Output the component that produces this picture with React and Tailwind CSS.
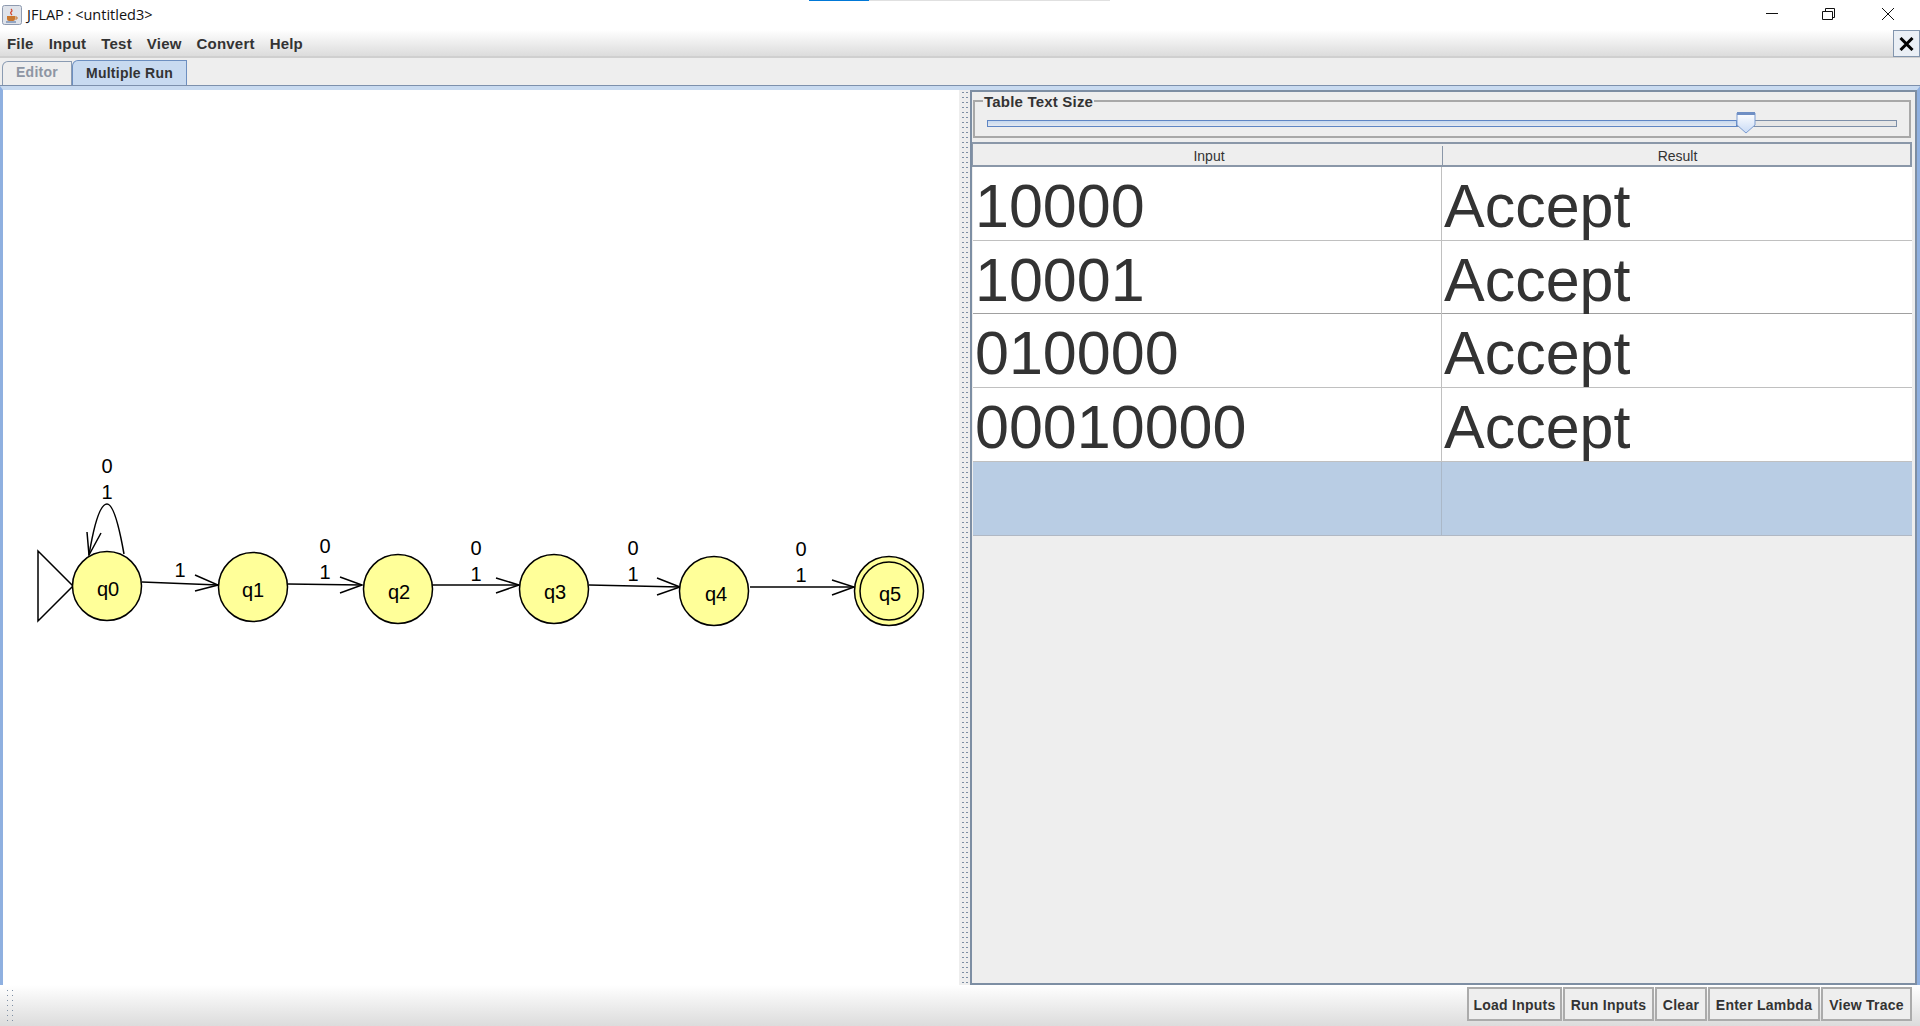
import React from "react";

const sans = "font-['Liberation_Sans',Arial,sans-serif]";

const states = [
  { name: "q0", x: 107, y: 586, tx: 108 },
  { name: "q1", x: 253, y: 587, tx: 253 },
  { name: "q2", x: 398, y: 589, tx: 399 },
  { name: "q3", x: 554, y: 589, tx: 555 },
  { name: "q4", x: 714, y: 591, tx: 716 },
  { name: "q5", x: 889, y: 591, tx: 890, final: true },
];

// line, then the two arrowhead barbs, all in page coordinates
const edges = [
  { d: "M142 582 L218 585", head: "M195 575 L218 585 L195 591" },
  { d: "M288 584 L362 585", head: "M340 577 L362 585 L340 593" },
  { d: "M432 585 L519 585", head: "M496 578 L519 585 L496 593" },
  { d: "M589 585 L680 587", head: "M657 578 L680 587 L657 595" },
  { d: "M750 587 L854 587", head: "M832 580 L854 587 L832 595" },
];

const labels = [
  { t: "0", x: 107, y: 473 },
  { t: "1", x: 107, y: 499 },
  { t: "1", x: 180, y: 577 },
  { t: "0", x: 325, y: 553 },
  { t: "1", x: 325, y: 579 },
  { t: "0", x: 476, y: 555 },
  { t: "1", x: 476, y: 581 },
  { t: "0", x: 633, y: 555 },
  { t: "1", x: 633, y: 581 },
  { t: "0", x: 801, y: 556 },
  { t: "1", x: 801, y: 582 },
];

const rows = [
  { input: "10000", result: "Accept" },
  { input: "10001", result: "Accept", dark: true },
  { input: "010000", result: "Accept" },
  { input: "00010000", result: "Accept" },
];

const TitleBar = () => (
  <div className="relative flex h-[30px] shrink-0 items-center bg-white">
    <div className="absolute left-[809px] top-0 h-px w-[60px] bg-[#0078d7]" />
    <div className="absolute left-[869px] top-0 h-px w-[241px] bg-[#e0e0e0]" />
    <svg width="20" height="20" viewBox="0 0 20 20" className="ml-[2px]">
      <rect x="0.5" y="0.5" width="19" height="19" rx="2" fill="#dfe3ea" stroke="#8f9bb0" />
      <path d="M5 11 H13 V14 Q13 16 11 16 H7 Q5 16 5 14 Z" fill="#c9772e" />
      <path d="M13 12 H15 V14 H13" fill="none" stroke="#c9772e" />
      <path d="M9 4 Q11 6 9 7 Q8 8 10 10" fill="none" stroke="#d2452e" strokeWidth="1.2" />
      <path d="M4 17 H14" stroke="#4a6a9c" />
    </svg>
    <span className="ml-[5px] font-['Open_Sans',sans-serif] text-[14.5px] text-[#111]">JFLAP : &lt;untitled3&gt;</span>
    <div className="ml-auto mr-[3px] flex items-center">
      <svg width="46" height="30" viewBox="0 0 46 30"><path d="M11 13.5 H23" stroke="#111" strokeWidth="1" /></svg>
      <svg width="46" height="30" viewBox="0 0 46 30" className="ml-[12px]">
        <path d="M9.5 11.5 H19.5 V19.5 H9.5 Z M12.5 11 V8.5 H21.5 V17.5 H19.5" fill="none" stroke="#111" />
      </svg>
      <svg width="46" height="30" viewBox="0 0 46 30" className="ml-[12px]">
        <path d="M11 8 L23 20 M23 8 L11 20" stroke="#111" />
      </svg>
    </div>
  </div>
);

const MenuBar = () => (
  <div className={`flex h-[28px] shrink-0 items-center justify-between border-b-2 border-[#cfcfcf] bg-gradient-to-b from-white to-[#dcdcdc] ${sans}`}>
    <div className="flex gap-[15px] pl-[7px] pt-[2px] text-[15px] font-bold tracking-[0.2px] text-[#333]">
      <span>File</span>
      <span>Input</span>
      <span>Test</span>
      <span>View</span>
      <span>Convert</span>
      <span>Help</span>
    </div>
    <button className="mb-[1px] flex h-[27px] w-[27px] items-center justify-center self-start border border-[#8295ad] bg-[#eaeff5]">
      <svg width="15" height="14" viewBox="0 0 15 14"><path d="M1.5 1 L13.5 13 M13.5 1 L1.5 13" stroke="#000" strokeWidth="3" /></svg>
    </button>
  </div>
);

const TabStrip = () => (
  <div className={`flex h-[27px] shrink-0 items-end bg-[#eeeeee] pl-[2px] text-[14px] font-bold tracking-[0.25px] ${sans}`}>
    <div className="flex h-[24px] w-[70px] items-center justify-center rounded-tl-[6px] border border-b-0 border-[#8a9bb2] pb-[2px] text-[#8d95a3]">Editor</div>
    <div className="flex h-[25px] w-[115px] items-center justify-center rounded-tl-[6px] border border-b-0 border-[#6d8fc0] bg-[#c8daf0] pt-[1px] text-[#333]">Multiple Run</div>
  </div>
);

const Graph = () => (
  <svg width="956" height="895" viewBox="3 90 956 895" className="block">
    <path d="M38 551 L73 586 L38 621 Z" fill="none" stroke="#000" strokeWidth="1.5" />
    <path d="M124 554 C118 520 112 504 107 504 C100 504 94 525 89 555" fill="none" stroke="#000" strokeWidth="1.5" />
    <path d="M87 532 L89 555 L101 533" fill="none" stroke="#000" strokeWidth="1.5" />
    {edges.map((e) => (
      <g key={e.d} fill="none" stroke="#000" strokeWidth="1.5">
        <path d={e.d} />
        <path d={e.head} />
      </g>
    ))}
    {states.map((s) => (
      <g key={s.name}>
        <circle cx={s.x} cy={s.y} r="34.5" fill="#ffff99" stroke="#000" strokeWidth="1.5" />
        {s.final && <circle cx={s.x} cy={s.y} r="29" fill="none" stroke="#000" strokeWidth="1.5" />}
        <text x={s.tx} y={s.y + 10} textAnchor="middle" fontSize="20" fontFamily="Liberation Sans, Arial, sans-serif">{s.name}</text>
      </g>
    ))}
    {labels.map((l) => (
      <text key={`${l.x}-${l.y}`} x={l.x} y={l.y} textAnchor="middle" fontSize="20" fontFamily="Liberation Sans, Arial, sans-serif">{l.t}</text>
    ))}
  </svg>
);

const SizeSlider = () => (
  <div className={`relative ml-[1px] mr-[4px] mt-[8px] h-[38px] shrink-0 border-2 border-[#a8a8a8] ${sans}`}>
    <span className="absolute left-[8px] top-[-9px] bg-[#eeeeee] px-px text-[15px] font-bold leading-[18px] tracking-[0.2px] text-[#333]">Table Text Size</span>
    <div className="absolute left-[12px] top-[18px] h-[7px] w-[750px] border border-[#5f86c4] bg-gradient-to-b from-[#c6d8ef] to-[#e4e9f0]" />
    <div className="absolute left-[762px] top-[18px] h-[7px] w-[160px] border border-[#7d8fa8] bg-[#e6e6e6]" />
    <svg width="20" height="22" viewBox="0 0 20 22" className="absolute left-[761px] top-[10px]">
      <defs>
        <linearGradient id="thumb" x1="0" y1="0" x2="0" y2="1">
          <stop offset="0" stopColor="#ffffff" />
          <stop offset="1" stopColor="#c8daf5" />
        </linearGradient>
      </defs>
      <path d="M1 1 H19 V13 L10 21 L1 13 Z" fill="url(#thumb)" stroke="#7c9cd0" />
      <rect x="1" y="0" width="18" height="3" fill="#6f8fc4" />
    </svg>
  </div>
);

const RunTable = () => (
  <div className={`mr-[3px] mt-[4px] flex flex-1 flex-col ${sans}`}>
    <div className="grid h-[25px] shrink-0 grid-cols-[469px_1fr] border-y-2 border-r-2 border-l border-[#8a97a8] bg-[#eeeeee] pt-[2px] text-[14px] text-[#333]">
      <div className="flex items-center justify-center pl-[3px]">Input</div>
      <div className="flex items-center justify-center border-l border-[#8a97a8] pl-[2px]">Result</div>
    </div>
    {rows.map((r) => (
      <div key={r.input} className={`ml-px grid h-[73.7px] shrink-0 grid-cols-[469px_1fr] border-b bg-white text-[61px] leading-[72px] text-[#333] ${r.dark ? "border-[#a0a0a0]" : "border-[#c0c0c0]"}`}>
        <div className="border-r border-[#c0c0c0] pl-[2px] pt-[3px]">{r.input}</div>
        <div className="pl-[2px] pt-[3px]">{r.result}</div>
      </div>
    ))}
    <div className="ml-px grid h-[74.5px] shrink-0 grid-cols-[469px_1fr] border-b border-[#b0b8c4] bg-[#b9cde4]">
      <div className="border-r border-[#aab8c8]" />
      <div />
    </div>
  </div>
);

const ButtonBar = () => {
  const buttons = [
    { label: "Load Inputs", w: "w-[95px]" },
    { label: "Run Inputs", w: "w-[91px]" },
    { label: "Clear", w: "w-[52px]" },
    { label: "Enter Lambda", w: "w-[112px]" },
    { label: "View Trace", w: "w-[91px]" },
  ];
  return (
    <div className={`flex h-[41px] shrink-0 items-start justify-between bg-gradient-to-b from-white to-[#dcdcdc] pt-[2px] pl-[5px] pr-[8px] ${sans}`}>
      <div className="mt-[1px] h-[35px] w-[12px] bg-[radial-gradient(circle,#7d8ea3_0.8px,transparent_1px)] bg-[length:5px_5px]" />
      <div className="flex gap-[1px]">
        {buttons.map((b) => (
          <button key={b.label} className={`h-[34px] ${b.w} border-2 border-[#ababab] bg-[#eeeeee] pt-[2px] text-[14px] font-bold tracking-[0.25px] text-[#333]`}>
            {b.label}
          </button>
        ))}
      </div>
    </div>
  );
};

export default function App() {
  return (
    <div className="flex h-screen w-full flex-col overflow-hidden bg-[#eeeeee]">
      <TitleBar />
      <MenuBar />
      <TabStrip />
      <div className="flex min-h-0 flex-1 flex-col border-t border-[#7d90ac]">
        <div className="flex min-h-0 flex-1 flex-col border-x-[3px] border-t-[4px] border-x-[#8fb0e0] border-t-[#c8daf0]">
          <div className="flex min-h-0 flex-1">
            <div className="w-[956px] bg-white">
              <Graph />
            </div>
            <div className="flex w-[11px] justify-center bg-[#eeeeee]">
              <div className="h-full w-[7px] bg-[radial-gradient(circle,#7d8ea3_0.8px,transparent_1px)] bg-[length:4px_5px]" />
            </div>
            <div className="flex flex-1 flex-col border-2 border-[#7d8ea3] bg-[#eeeeee]">
              <SizeSlider />
              <RunTable />
            </div>
          </div>
        </div>
      </div>
      <ButtonBar />
    </div>
  );
}
